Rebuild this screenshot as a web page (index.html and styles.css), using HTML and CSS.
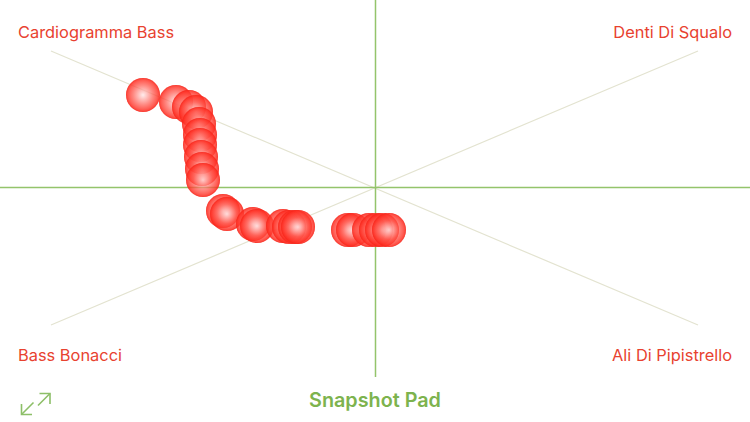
FILE: index.html
```
<!DOCTYPE html>
<html>
<head>
<meta charset="utf-8">
<link rel="stylesheet" href="styles.css">
</head>
<body>
<div class="pad">
  <svg class="grid" width="750" height="422" viewBox="0 0 750 422">
    <line x1="51" y1="51" x2="698" y2="325" class="diag"/>
    <line x1="698" y1="51" x2="51" y2="325" class="diag"/>
    <line x1="0" y1="187.5" x2="750" y2="187.5" class="axis"/>
    <line x1="375.5" y1="0" x2="375.5" y2="377" class="axis"/>
  </svg>
  <div class="labels">
    <div class="row">
      <span class="label">Cardiogramma Bass</span>
      <span class="label">Denti Di Squalo</span>
    </div>
    <div class="row">
      <span class="label">Bass Bonacci</span>
      <span class="label">Ali Di Pipistrello</span>
    </div>
    <div class="footer">
      <svg class="expand" width="32" height="32" viewBox="0 0 32 32">
        <path d="M19.5 7.5 H30 V18" />
        <path d="M30 7.5 L18 19.5" />
        <path d="M1.5 18 V28.5 H12" />
        <path d="M1.5 28.5 L13.5 16.5" />
      </svg>
      <span class="title">Snapshot Pad</span>
    </div>
  </div>
  <div class="dot" style="left:143px;top:95px"></div>
  <div class="dot" style="left:176px;top:102px"></div>
  <div class="dot" style="left:189px;top:107px"></div>
  <div class="dot" style="left:196px;top:112px"></div>
  <div class="dot" style="left:199px;top:124px"></div>
  <div class="dot" style="left:200px;top:135px"></div>
  <div class="dot" style="left:200px;top:145px"></div>
  <div class="dot" style="left:201px;top:157px"></div>
  <div class="dot" style="left:202px;top:169px"></div>
  <div class="dot" style="left:203px;top:180px"></div>
  <div class="dot" style="left:223px;top:211px"></div>
  <div class="dot" style="left:227px;top:214px"></div>
  <div class="dot" style="left:253px;top:224px"></div>
  <div class="dot" style="left:257px;top:226px"></div>
  <div class="dot" style="left:283px;top:226px"></div>
  <div class="dot" style="left:289px;top:227px"></div>
  <div class="dot" style="left:295px;top:227px"></div>
  <div class="dot" style="left:298px;top:227px"></div>
  <div class="dot" style="left:348px;top:230px"></div>
  <div class="dot" style="left:353px;top:230px"></div>
  <div class="dot" style="left:369px;top:230px"></div>
  <div class="dot" style="left:376px;top:230px"></div>
  <div class="dot" style="left:382px;top:230px"></div>
  <div class="dot" style="left:389px;top:230px"></div>
</div>
</body>
</html>
```
FILE: styles.css
```
html, body {
  margin: 0;
  padding: 0;
  background: #ffffff;
}
.pad {
  position: relative;
  width: 750px;
  height: 422px;
  overflow: hidden;
  font-family: Inter, "Liberation Sans", sans-serif;
}
.grid {
  position: absolute;
  left: 0;
  top: 0;
}
.diag {
  stroke: #e3e3d0;
  stroke-width: 1.2;
}
.axis {
  stroke: #94c46b;
  stroke-width: 1.5;
}
.labels {
  position: relative;
  height: 422px;
  display: flex;
  flex-direction: column;
  box-sizing: border-box;
  padding: 21px 18px 0 18px;
}
.row {
  display: flex;
  justify-content: space-between;
  height: 324px;
}
.row + .row {
  height: 34px;
}
.label {
  color: #e8422f;
  font-size: 16.4px;
  line-height: 22px;
}
.footer {
  position: relative;
  display: flex;
  justify-content: center;
  align-items: center;
  height: 44px;
}
.title {
  color: #7db34e;
  font-size: 19.8px;
  font-weight: 600;
}
.expand {
  position: absolute;
  left: 2px;
  top: 8px;
  fill: none;
  stroke: #8dbf68;
  stroke-width: 1.6;
}
.dot {
  position: absolute;
  width: 34px;
  height: 34px;
  margin: -17px 0 0 -17px;
  border-radius: 50%;
  background: radial-gradient(circle at 50% 50%, rgba(255,230,230,0.75) 0%, rgba(255,90,80,0.7) 40%, rgba(255,40,28,0.88) 72%, rgba(245,38,28,0.75) 100%);
  box-shadow: inset 0 0 2px rgba(235,35,25,0.9);
}
```
